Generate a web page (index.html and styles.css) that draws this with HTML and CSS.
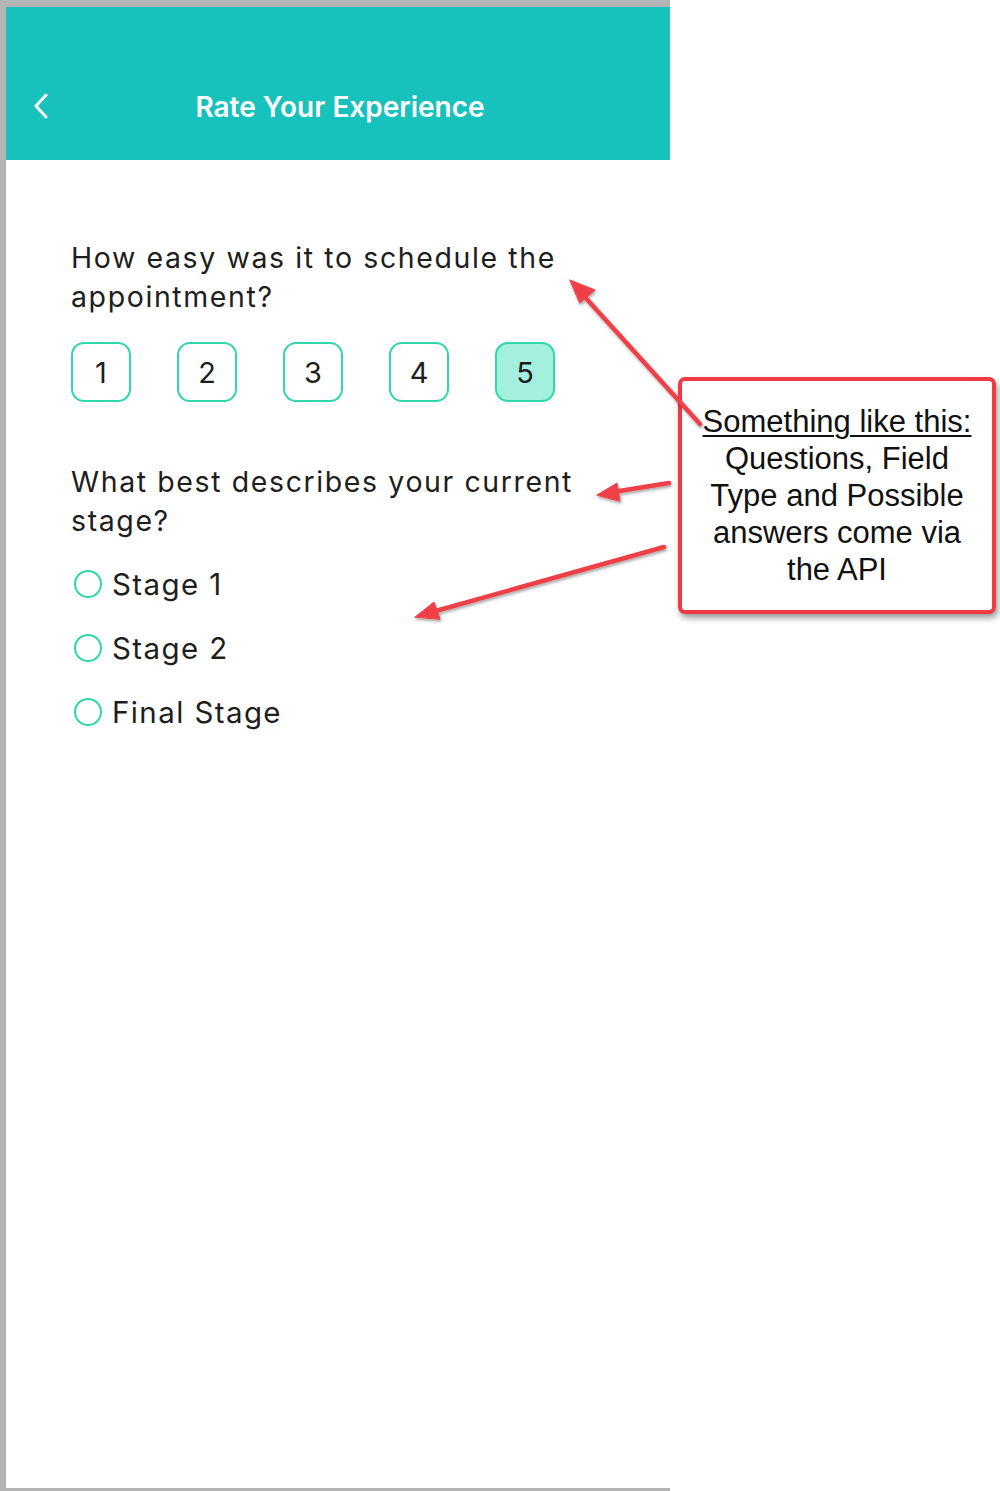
FILE: index.html
```html
<!DOCTYPE html>
<html>
<head>
<meta charset="utf-8">
<link rel="stylesheet" href="styles.css">
</head>
<body>
<div class="canvas">
  <div class="phone">
    <header class="appbar">
      <svg class="back" width="16" height="26" viewBox="0 0 16 26"><path d="M13 2 L3 13 L13 24" fill="none" stroke="#fff" stroke-width="3" stroke-linecap="round" stroke-linejoin="round"/></svg>
      <h1 class="title">Rate Your Experience</h1>
    </header>
    <main class="content">
      <section class="question">
        <p class="q-text">How easy was it to schedule the appointment?</p>
        <div class="scale">
          <span class="opt">1</span>
          <span class="opt">2</span>
          <span class="opt">3</span>
          <span class="opt">4</span>
          <span class="opt opt-on">5</span>
        </div>
      </section>
      <section class="question q2">
        <p class="q-text">What best describes your current stage?</p>
        <ul class="radios">
          <li class="radio"><span class="dot"></span>Stage 1</li>
          <li class="radio"><span class="dot"></span>Stage 2</li>
          <li class="radio"><span class="dot"></span>Final Stage</li>
        </ul>
      </section>
    </main>
  </div>
  <div class="note">
    <span class="note-head">Something like this:</span><br>Questions, Field Type and Possible answers come via the API
  </div>
  <svg class="arrows" width="1000" height="1491" viewBox="0 0 1000 1491">
    <defs>
      <filter id="sh" x="-20%" y="-20%" width="140%" height="140%">
        <feDropShadow dx="1" dy="2" stdDeviation="1.5" flood-color="#000" flood-opacity="0.35"/>
      </filter>
    </defs>
    <g fill="#ef4046" stroke="#ef4046" stroke-width="4.5" stroke-linecap="round" filter="url(#sh)">
      <line x1="700" y1="424" x2="584" y2="296"/>
      <polygon points="570,280 595,290 580,303" stroke-width="1"/>
      <line x1="669" y1="483" x2="613" y2="492"/>
      <polygon points="597,495 617,483 620,501" stroke-width="1"/>
      <line x1="664" y1="547" x2="432" y2="612"/>
      <polygon points="415,617 434,602 440,619" stroke-width="1"/>
    </g>
  </svg>
</div>
</body>
</html>
```
FILE: styles.css
```css
* { box-sizing: border-box; }
html, body { margin: 0; padding: 0; background: #fff; }
.canvas { position: relative; width: 1000px; height: 1491px; overflow: hidden; }
.phone {
  width: 670px;
  height: 1491px;
  border-left: 6px solid #b4b4b4;
  border-top: 7px solid #b4b4b4;
  border-bottom: 3px solid #b4b4b4;
  background: #fff;
  font-family: Inter, "Noto Sans", sans-serif;
  color: #1e1e1e;
}
.appbar {
  height: 153px;
  background: #17c2bc;
  display: flex;
  align-items: center;
  padding-top: 46px;
  position: relative;
}
.back { position: absolute; left: 27px; top: 86px; }
.title {
  margin: 0;
  width: 100%;
  text-align: center;
  color: #fff;
  font-size: 28px;
  font-weight: 600;
  padding-left: 4px;
}
.content { padding: 78px 0 0 65px; }
.q-text {
  margin: 0;
  width: 540px;
  font-size: 28.5px;
  line-height: 39px;
  letter-spacing: 1.6px;
}
.scale { display: flex; gap: 46px; margin-top: 26px; }
.opt {
  width: 60px; height: 60px;
  border: 2px solid #2ed7ac;
  border-radius: 13px;
  display: flex; align-items: center; justify-content: center;
  font-size: 29px;
}
.opt-on { background: #a2f0dd; }
.q2 { margin-top: 60px; }
.radios { list-style: none; margin: 12px 0 0; padding: 0; }
.radio {
  display: flex; align-items: center;
  height: 64px;
  font-size: 29.5px;
  letter-spacing: 1.4px;
}
.dot {
  width: 28px; height: 28px;
  border: 2.5px solid #2ed7ac;
  border-radius: 50%;
  margin: 0 10px 0 3px;
}
.note {
  position: absolute;
  left: 678px; top: 377px;
  width: 318px; height: 237px;
  border: 4px solid #ef3a41;
  border-radius: 7px;
  background: #fff;
  box-shadow: 2px 4px 6px rgba(0,0,0,0.4);
  font-family: "Liberation Sans", Arial, sans-serif;
  font-size: 31px;
  line-height: 37px;
  text-align: center;
  color: #111;
  padding: 22px 22px 0;
}
.note-head { display: inline-block; margin: 0 -20px; text-decoration: underline; text-decoration-thickness: 2px; text-underline-offset: 3px; }
.arrows { position: absolute; left: 0; top: 0; pointer-events: none; }
```
